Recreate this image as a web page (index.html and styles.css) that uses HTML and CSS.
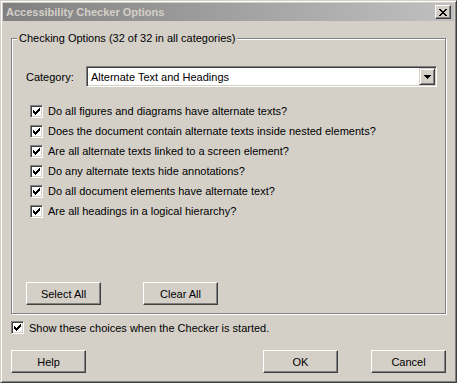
FILE: index.html
```html
<!DOCTYPE html>
<html lang="en">
<head>
    <meta charset="UTF-8">
    <title>Accessibility Checker Options</title>
    <link rel="stylesheet" href="styles.css">
</head>
<body>
    <div class="window">
        <div class="titlebar">
            <span class="title">Accessibility Checker Options</span>
            <span class="close-btn">
                <svg width="8" height="7" viewBox="0 0 8 7" shape-rendering="crispEdges">
                    <rect x="0" y="0" width="2" height="1"/><rect x="6" y="0" width="2" height="1"/>
                    <rect x="1" y="1" width="2" height="1"/><rect x="5" y="1" width="2" height="1"/>
                    <rect x="2" y="2" width="4" height="1"/>
                    <rect x="3" y="3" width="2" height="1"/>
                    <rect x="2" y="4" width="4" height="1"/>
                    <rect x="1" y="5" width="2" height="1"/><rect x="5" y="5" width="2" height="1"/>
                    <rect x="0" y="6" width="2" height="1"/><rect x="6" y="6" width="2" height="1"/>
                </svg>
            </span>
        </div>

        <div class="content">
            <fieldset class="group">
                <legend>Checking Options (32 of 32 in all categories)</legend>

                <div class="group-body">
                    <div class="category-row">
                        <span class="category-label">Category:</span>
                        <div class="combo">
                            <span class="combo-text">Alternate Text and Headings</span>
                            <span class="combo-btn">
                                <svg width="7" height="4" viewBox="0 0 7 4" shape-rendering="crispEdges">
                                    <rect x="0" y="0" width="7" height="1"/>
                                    <rect x="1" y="1" width="5" height="1"/>
                                    <rect x="2" y="2" width="3" height="1"/>
                                    <rect x="3" y="3" width="1" height="1"/>
                                </svg>
                            </span>
                        </div>
                    </div>

                    <ul class="checks">
                        <li><span class="checkbox"></span>Do all figures and diagrams have alternate texts?</li>
                        <li><span class="checkbox"></span>Does the document contain alternate texts inside nested elements?</li>
                        <li><span class="checkbox"></span>Are all alternate texts linked to a screen element?</li>
                        <li><span class="checkbox"></span>Do any alternate texts hide annotations?</li>
                        <li><span class="checkbox"></span>Do all document elements have alternate text?</li>
                        <li><span class="checkbox"></span>Are all headings in a logical hierarchy?</li>
                    </ul>

                    <div class="group-buttons">
                        <button class="btn">Select All</button>
                        <button class="btn">Clear All</button>
                    </div>
                </div>
            </fieldset>

            <div class="show-row">
                <span class="checkbox"></span>Show these choices when the Checker is started.
            </div>

            <div class="footer">
                <button class="btn">Help</button>
                <button class="btn btn-ok">OK</button>
                <button class="btn btn-cancel">Cancel</button>
            </div>
        </div>
    </div>

    <script>
        // same classic check mark in every box
        var mark = '<svg width="7" height="7" viewBox="0 0 7 7" shape-rendering="crispEdges">' +
            '<rect x="6" y="0" width="1" height="1"/><rect x="5" y="1" width="2" height="1"/>' +
            '<rect x="0" y="2" width="1" height="1"/><rect x="4" y="2" width="3" height="1"/>' +
            '<rect x="0" y="3" width="2" height="1"/><rect x="3" y="3" width="3" height="1"/>' +
            '<rect x="0" y="4" width="5" height="1"/><rect x="1" y="5" width="3" height="1"/>' +
            '<rect x="2" y="6" width="1" height="1"/></svg>';
        document.querySelectorAll('.checkbox').forEach(function (box) {
            box.innerHTML = mark;
        });
    </script>
</body>
</html>
```

FILE: styles.css
```css
* {
    box-sizing: border-box;
}

body {
    margin: 0;
    font-family: 'Liberation Sans', Arial, sans-serif;
    font-size: 11px;
    color: #000;
    background: #d4d0c8;
}

.window {
    width: 457px;
    height: 383px;
    background: #d4d0c8;
    border: 1px solid;
    border-color: #d4d0c8 #404040 #404040 #d4d0c8;
    box-shadow: inset 1px 1px #fff, inset -1px -1px #808080;
    padding: 2px;
    display: flex;
    flex-direction: column;
}

.titlebar {
    height: 18px;
    display: flex;
    align-items: center;
    justify-content: space-between;
    background: linear-gradient(to right, #808080, #c0c0c0);
    padding: 0 3px 0 3px;
}

.title {
    font-weight: bold;
    color: #d4d0c8;
}

.close-btn {
    width: 16px;
    height: 14px;
    background: #d4d0c8;
    border: 1px solid;
    border-color: #fff #404040 #404040 #fff;
    box-shadow: inset -1px -1px #808080;
    display: flex;
    align-items: center;
    justify-content: center;
}

.content {
    flex: 1;
    display: flex;
    flex-direction: column;
    padding: 0 8px;
}

.group {
    margin: 10px 0 0;
    padding: 0 8px 8px 14px;
    min-width: 0;
    border: 1px solid #808080;
    box-shadow: inset 1px 1px #fff, 1px 1px #fff;
}

.group legend {
    margin-left: -9px;
    padding: 0 2px;
    line-height: 14px;
    background: #d4d0c8;
}

.group-body {
    height: 260px;
    display: flex;
    flex-direction: column;
}

.category-row {
    display: flex;
    align-items: center;
    height: 21px;
    margin-top: 21px;
}

.category-label {
    width: 60px;
}

.combo {
    width: 351px;
    height: 21px;
    border: 1px solid;
    border-color: #808080 #fff #fff #808080;
    box-shadow: inset 1px 1px #404040, inset -1px -1px #d4d0c8;
    background: #fff;
    padding: 1px;
    display: flex;
    align-items: center;
}

.combo-text {
    flex: 1;
    padding-left: 3px;
}

.combo-btn {
    width: 16px;
    height: 17px;
    background: #d4d0c8;
    border: 1px solid;
    border-color: #d4d0c8 #404040 #404040 #d4d0c8;
    box-shadow: inset 1px 1px #fff, inset -1px -1px #808080;
    display: flex;
    align-items: center;
    justify-content: center;
}

.checks {
    list-style: none;
    margin: 14px 0 0;
    padding: 0 0 0 4px;
}

.checks li {
    height: 20px;
    display: flex;
    align-items: center;
}

.checkbox {
    width: 13px;
    height: 13px;
    flex-shrink: 0;
    margin-right: 5px;
    background: #fff;
    border: 1px solid;
    border-color: #808080 #fff #fff #808080;
    box-shadow: inset 1px 1px #404040, inset -1px -1px #d4d0c8;
    display: flex;
    align-items: center;
    justify-content: center;
}

.group-buttons {
    margin-top: auto;
    display: flex;
    gap: 42px;
}

.btn {
    width: 75px;
    height: 23px;
    padding: 0;
    font-family: inherit;
    font-size: 11px;
    color: #000;
    background: #d4d0c8;
    border: 1px solid;
    border-color: #fff #404040 #404040 #fff;
    box-shadow: inset -1px -1px #808080;
}

.show-row {
    display: flex;
    align-items: center;
    height: 13px;
    margin-top: 7px;
}

.footer {
    display: flex;
    margin-top: 16px;
}

.btn-ok {
    margin-left: auto;
}

.btn-cancel {
    margin-left: 33px;
}
```
